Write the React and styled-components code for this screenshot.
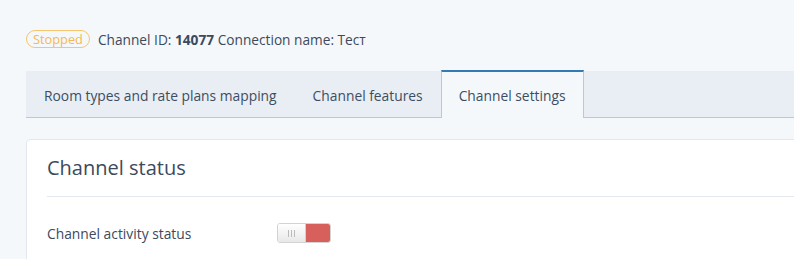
import styled, { createGlobalStyle } from 'styled-components'

const GlobalStyle = createGlobalStyle`
  html, body {
    margin: 0;
    padding: 0;
    background: #f5f8fb;
    overflow: hidden;
  }
  body {
    font-family: "Open Sans", "Liberation Sans", sans-serif;
    color: #3b4a5d;
  }
`

export default function App() {
  return (
    <>
      <GlobalStyle />
      <Page>
        <InfoLine>
          <Badge>Stopped</Badge>
          <span>
            Channel ID: <b>14077</b> Connection name: Тест
          </span>
        </InfoLine>
        <Tabs>
          <Tab>Room types and rate plans mapping</Tab>
          <Tab>Channel features</Tab>
          <Tab active>Channel settings</Tab>
        </Tabs>
        <Card>
          <CardTitle>Channel status</CardTitle>
          <Row>
            <Label>Channel activity status</Label>
            <Switch>
              <Handle>
                <Grip />
              </Handle>
              <OffSide />
            </Switch>
          </Row>
        </Card>
      </Page>
    </>
  )
}

const Page = styled.div`
  width: 900px;
  padding: 29px 0 0 26px;
`
const InfoLine = styled.div`
  display: flex;
  align-items: center;
  gap: 8px;
  height: 20px;
  font-size: 13.7px;
  color: #3b4a5d;

  b {
    font-weight: 700;
  }
`
const Badge = styled.span`
  display: inline-flex;
  align-items: center;
  height: 16px;
  padding: 0 6px;
  border: 1px solid #f6c56c;
  border-radius: 10px;
  color: #f4b850;
  font-size: 12.8px;
`
const Tabs = styled.div`
  display: flex;
  margin-top: 22px;
  height: 46px;
  background: #e9eef5;
  border-bottom: 1px solid #a9cdea;
`
const Tab = styled.div`
  display: flex;
  align-items: center;
  padding: 0 17px;
  font-size: 13.82px;
  color: #3c4d62;
  margin-top: ${(p) => (p.active ? '-1px' : '0')};
  margin-bottom: ${(p) => (p.active ? '-1px' : '0')};
  background: ${(p) => (p.active ? '#f5f8fb' : 'transparent')};
  border-top: 2px solid ${(p) => (p.active ? '#337ab7' : 'transparent')};
  border-left: 1px solid ${(p) => (p.active ? '#a9cdea' : 'transparent')};
  border-right: 1px solid ${(p) => (p.active ? '#a9cdea' : 'transparent')};
`
const Card = styled.div`
  margin-top: 21px;
  background: #fff;
  border: 1px solid #e3e8ee;
  border-radius: 4px;
  padding: 0 20px;
  height: 200px;
`
const CardTitle = styled.div`
  padding: 14px 0 14px;
  font-size: 20px;
  line-height: 28px;
  color: #3b4a5d;
  border-bottom: 1px solid #e3e8ee;
`
const Row = styled.div`
  display: flex;
  align-items: center;
  margin-top: 26px;
`
const Label = styled.div`
  width: 230px;
  font-size: 13.82px;
  color: #3b4a5d;
`
const Switch = styled.div`
  display: flex;
  width: 54px;
  height: 20px;
  border: 1px solid #d3d3d3;
  border-radius: 3px;
  overflow: hidden;
  box-sizing: border-box;
`
const Handle = styled.div`
  width: 27px;
  display: flex;
  align-items: center;
  justify-content: center;
  background: linear-gradient(#ffffff, #e8e8e8);
  border-right: 1px solid #d0d0d0;
`
const Grip = styled.span`
  width: 5px;
  height: 7px;
  border-left: 1px solid #bbb;
  border-right: 1px solid #bbb;
  position: relative;

  &::after {
    content: '';
    position: absolute;
    left: 2px;
    top: 0;
    width: 1px;
    height: 7px;
    background: #bbb;
  }
`
const OffSide = styled.div`
  flex: 1;
  background: #d7605c;
`
